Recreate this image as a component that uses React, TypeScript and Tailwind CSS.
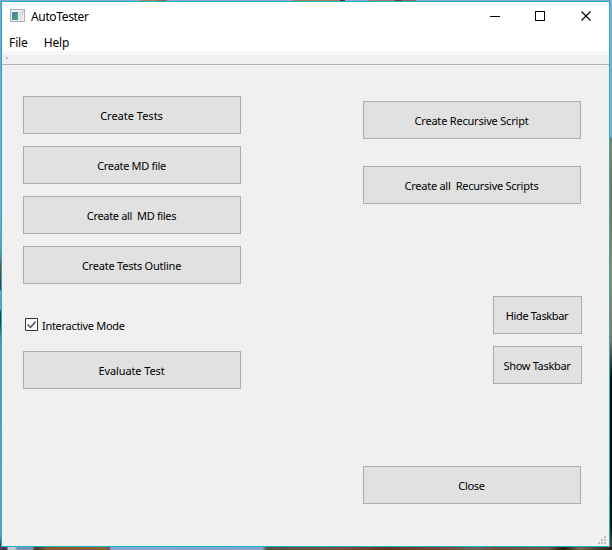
import { type ReactNode } from 'react';

function PushButton({ children, className = 'w-[218px]', label = '' }: { children: ReactNode; className?: string; label?: string }) {
  return (
    <button type="button" className={`flex h-[38px] shrink-0 items-center justify-center border border-[#adadad] bg-[#e1e1e1] pt-[2px] pr-[1px] whitespace-pre ${className}`}>
      <span className={label}>{children}</span>
    </button>
  );
}

function TitleBar() {
  return (
    <header className="flex h-[32px] items-start bg-white">
      <svg className="mt-[7px] ml-[8px]" width="15" height="13" shapeRendering="crispEdges">
        <defs>
          <linearGradient id="pane" x1="0" y1="0" x2="1" y2="1">
            <stop offset="0" stopColor="#5277ae" />
            <stop offset="1" stopColor="#43ad75" />
          </linearGradient>
        </defs>
        <rect width="15" height="13" fill="#a9aeb5" />
        <rect x="1" y="1" width="13" height="11" fill="#eceef0" />
        <rect x="2" y="3" width="6" height="8" fill="url(#pane)" />
        <rect x="9" y="3" width="3" height="8" fill="#e0e3e6" />
        <rect x="12" y="2" width="1" height="3" fill="#b4b9be" />
      </svg>
      <h1 className="mt-[6px] ml-[6px] text-[12px] leading-[18px] tracking-[-0.35px]">AutoTester</h1>
      <svg className="mt-[8px] mr-[16px] ml-auto" width="103" height="13" fill="none" stroke="#000">
        <path d="M0 6.5h10M45.5 1.5h9v9h-9z" shapeRendering="crispEdges" />
        <path d="M91.5 1.5l9 9M100.5 1.5l-9 9" strokeWidth="1.2" />
      </svg>
    </header>
  );
}

export default function App() {
  return (
    <div className="relative h-[550px] w-[612px] overflow-hidden bg-[#84a3ce] pt-px pl-px font-['Noto_Sans',sans-serif] text-[11px] leading-[16px] text-black">
      <div className="absolute top-0 left-0 h-px w-full bg-[linear-gradient(90deg,#8aa9d4_0_140px,#a98060_140px_158px,#8d6b5c_158px_167px,#8ba8ce_167px_292px,#9d815c_292px_340px,#4b3532_340px_345px,#8ca8ce_345px_369px,#a08065_369px_395px,#57423a_395px_402px,#8b6b52_402px_416px,#86a7d4_416px)]" />
      <div className="absolute top-0 left-0 h-full w-px bg-[linear-gradient(#82a3d2_0_215px,#7f91ad_250px,#8f4b36_265px,#5b2930_289px,#7b98bd_291px_309px,#343d3b_312px_323px,#7187b2_340px,#7896c4_535px,#473252_545px)]" />
      <div className="absolute top-0 right-0 h-full w-[2px] bg-[linear-gradient(#87a9d8_0_136px,#7c7367_139px,#a07a56_147px,#8b694a_190px,#9f7e59_270px,#8f7659_340px,#4a3829_362px,#0e0d0e_380px_490px,#1a1512_525px,#59452e_545px)]" />
      <div className="absolute bottom-0 left-0 h-[3px] w-full bg-[linear-gradient(90deg,#493b5a_0_7px,#c8c9d0_8px_15px,#7595b5_17px_33px,#503c39_34px_38px,#8c5730_48px,#945e33_105px,#6c4c55_109px,#83a6d1_111px,#82a3c9_262px,#5c5148_267px,#65503d_305px,#7b503f_340px,#66351e_385px,#774e3b_450px,#6f625e_475px,#724c37_500px,#705b46_548px,#24170e_563px,#79664e_580px,#251f18_612px)]" />

      <main className="relative flex h-[546px] w-[609px] flex-col border border-[#18b5c7] bg-[#f0f0f0]">
        <TitleBar />
        <nav className="flex h-[18px] shrink-0 gap-[16px] bg-white pl-[7px] text-[12px] leading-[18px]">
          <span className="tracking-[-0.1px]">File</span>
          <span className="tracking-[-0.2px]">Help</span>
        </nav>
        <div className="h-[2px] shrink-0 border-b border-white bg-[#f0f0f0]" />
        <div className="h-[11px] shrink-0 border-b border-[#b4b4b4] pt-[3px] pl-[4px]">
          <div className="size-[2px] bg-[#bdbdbd]" />
        </div>

        <div className="flex grow justify-between pr-[27px] pl-[21px]">
          <section className="flex w-[218px] flex-col gap-[12px] pt-[31px]">
            <PushButton>Create Tests</PushButton>
            <PushButton label="tracking-[-0.33px]">Create MD file</PushButton>
            <PushButton label="tracking-[-0.34px]">Create all  MD files</PushButton>
            <PushButton label="tracking-[-0.22px]">Create Tests Outline</PushButton>
            <label className="mt-[22px] flex h-[13px] items-center gap-[4px] pl-[2px]">
              <svg width="13" height="13" fill="none">
                <path d="M.5.5h12v12H.5z" fill="#fff" stroke="#333" />
                <path d="M2.5 6.5l3 3 5-6" stroke="#444" strokeWidth="1.3" />
              </svg>
              <span className="pt-[3px] tracking-[-0.3px]">Interactive Mode</span>
            </label>
            <PushButton className="mt-[8px] w-[218px]" label="tracking-[-0.1px]">Evaluate Test</PushButton>
          </section>

          <section className="flex w-[219px] flex-col pt-[36px]">
            <PushButton label="tracking-[-0.2px]">Create Recursive Script</PushButton>
            <PushButton className="mt-[27px] w-[218px]" label="tracking-[-0.26px]">Create all  Recursive Scripts</PushButton>
            <PushButton className="mt-[92px] w-[89px] self-end" label="tracking-[-0.38px]">Hide Taskbar</PushButton>
            <PushButton className="mt-[12px] w-[89px] self-end" label="tracking-[-0.32px]">Show Taskbar</PushButton>
            <PushButton className="mt-[82px] w-[218px]" label="tracking-[-0.3px]">Close</PushButton>
          </section>
        </div>
      </main>
      <svg className="absolute right-[6px] bottom-[6px]" width="8" height="8" fill="#bfbfbf" shapeRendering="crispEdges">
        <path d="M6 0h2v2H6zM3 3h2v2H3zM6 3h2v2H6zM0 6h2v2H0zM3 6h2v2H3zM6 6h2v2H6z" />
      </svg>
    </div>
  );
}
